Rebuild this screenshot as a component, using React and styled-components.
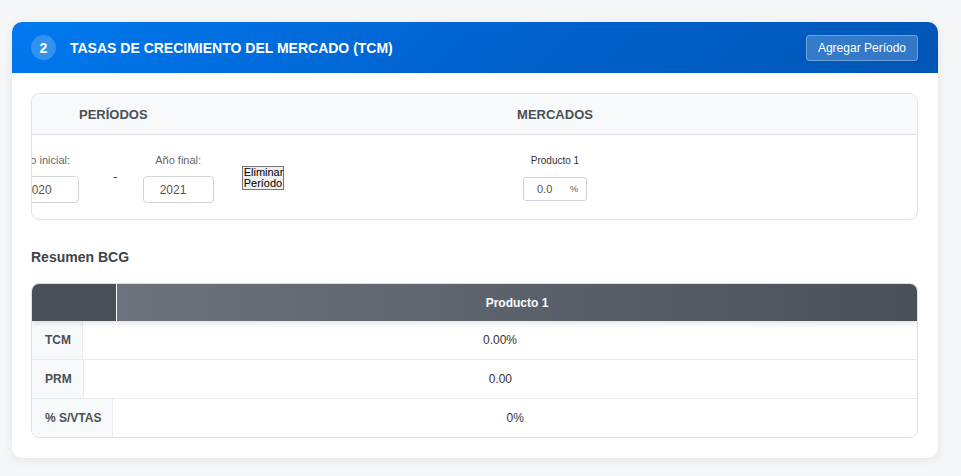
import { useEffect, useRef } from "react";
import styled, { createGlobalStyle } from "styled-components";

const GlobalStyle = createGlobalStyle`
    html, body {
        margin: 0;
        padding: 0;
        background: #f5f6f8;
        font-family: "Liberation Sans", Arial, sans-serif;
    }
`;

const Page = styled.div`
    padding: 22px 23px 19px 12px;
`;

const Card = styled.section`
    background: #fff;
    border-radius: 10px;
    box-shadow: 0 2px 10px rgba(0, 0, 0, 0.08);
    overflow: hidden;
`;

const Header = styled.header`
    display: flex;
    align-items: center;
    height: 51px;
    padding: 0 20px 0 19px;
    background: linear-gradient(135deg, #0079f0 0%, #0063cf 50%, #0056b6 100%);
    color: #fff;
`;

const StepBadge = styled.span`
    display: flex;
    align-items: center;
    justify-content: center;
    width: 25px;
    height: 25px;
    border-radius: 50%;
    background: rgba(255, 255, 255, 0.2);
    font-size: 14px;
    font-weight: 700;
    margin-right: 14px;
`;

const HeaderTitle = styled.h2`
    flex: 1;
    margin: 0;
    font-size: 14px;
    font-weight: 700;
`;

const AddButton = styled.button`
    height: 26px;
    padding: 0 11px;
    border: 1px solid rgba(255, 255, 255, 0.3);
    border-radius: 4px;
    background: rgba(255, 255, 255, 0.2);
    color: #fff;
    font-family: inherit;
    font-size: 12px;
`;

const Body = styled.div`
    padding: 20px 20px 20px 19px;
`;

const PeriodTable = styled.div`
    border: 1px solid #dfe3e8;
    border-radius: 8px;
    overflow-x: auto;
    scrollbar-width: none;
    &::-webkit-scrollbar {
        display: none;
    }
`;

const PeriodGrid = styled.div`
    display: grid;
    grid-template-columns: 320px 1fr;
    min-width: 922px;
`;

const HeadCell = styled.div`
    display: flex;
    align-items: center;
    height: 40px;
    background: #f8f9fa;
    border-bottom: 1px solid #dfe3e8;
    font-size: 13px;
    font-weight: 700;
    color: #495057;
    padding: ${(p) => (p.$center ? "0 124px 0 0" : "0 0 0 83px")};
    justify-content: ${(p) => (p.$center ? "center" : "flex-start")};
`;

const BodyCell = styled.div`
    box-sizing: border-box;
    display: flex;
    align-items: flex-start;
    height: 84px;
    padding: ${(p) => (p.$center ? "20px 124px 0 0" : "19px 0 0 12px")};
    justify-content: ${(p) => (p.$center ? "center" : "flex-start")};
`;

const Field = styled.div`
    display: flex;
    flex-direction: column;
    align-items: center;
`;

const FieldLabel = styled.label`
    font-size: ${(p) => (p.$small ? "10px" : "11px")};
    line-height: ${(p) => (p.$small ? "12px" : "13px")};
    color: ${(p) => (p.$small ? "#333" : "#666")};
    margin-bottom: ${(p) => (p.$small ? "10px" : "9px")};
`;

const YearInput = styled.input`
    box-sizing: border-box;
    width: 71px;
    height: 27px;
    padding: 0 16px;
    border: 1px solid #ced4da;
    border-radius: 4px;
    font-family: inherit;
    font-size: 12px;
    color: #555;
    background: #fff;
`;

const Dash = styled.span`
    margin: 15px 25px 0 34px;
    font-size: 14px;
    line-height: 16px;
    color: #555;
`;

const RemoveButton = styled.button`
    width: 42px;
    margin: 12px 0 0 28px;
    padding: 0 1px;
    border: 1px solid #767676;
    border-radius: 0;
    background: #efefef;
    color: #000;
    font-family: inherit;
    font-size: 11px;
    line-height: 11px;
    text-align: left;
`;

const RateBox = styled.div`
    display: flex;
    align-items: center;
    box-sizing: border-box;
    width: 64px;
    height: 24px;
    padding: 0 8px 0 13px;
    border: 1px solid #ced4da;
    border-radius: 3px;
    font-size: 11px;
    color: #555;
`;

const RateValue = styled.span`
    flex: 1;
`;

const Percent = styled.span`
    font-size: 9px;
`;

const SectionTitle = styled.h3`
    margin: 29px 0 17px;
    font-size: 14px;
    line-height: 17px;
    font-weight: 700;
    color: #3d4449;
`;

const Summary = styled.div`
    border: 1px solid #dee2e6;
    border-radius: 8px;
    overflow: hidden;
`;

const SummaryHead = styled.div`
    display: flex;
    height: 37px;
    box-shadow: 0 2px 6px rgba(0, 0, 0, 0.12);
    position: relative;
`;

const CornerCell = styled.div`
    width: 84px;
    background: #495057;
    border-right: 1px solid #fff;
`;

const ProductHead = styled.div`
    flex: 1;
    display: flex;
    align-items: center;
    justify-content: center;
    background: linear-gradient(90deg, #6c737c 0%, #4a5058 100%);
    color: #fff;
    font-size: 12px;
    font-weight: 700;
`;

const Row = styled.div`
    display: flex;
    height: 38px;
    border-top: ${(p) => (p.$first ? "none" : "1px solid #e9ecef")};
`;

const RowLabel = styled.div`
    display: flex;
    align-items: center;
    padding: 0 11px 0 13px;
    background: #f8f9fa;
    border-right: 1px solid #e9ecef;
    font-size: 12px;
    font-weight: 700;
    color: #495057;
`;

const RowValue = styled.div`
    flex: 1;
    display: flex;
    align-items: center;
    justify-content: center;
    font-size: 12px;
    color: #333;
`;

const summaryRows = [
    { label: "TCM", value: "0.00%" },
    { label: "PRM", value: "0.00" },
    { label: "% S/VTAS", value: "0%" },
];

export default function App() {
    const scrollRef = useRef(null);

    useEffect(() => {
        if (scrollRef.current) scrollRef.current.scrollLeft = 36;
    }, []);

    return (
        <Page>
            <GlobalStyle />
            <Card>
                <Header>
                    <StepBadge>2</StepBadge>
                    <HeaderTitle>TASAS DE CRECIMIENTO DEL MERCADO (TCM)</HeaderTitle>
                    <AddButton>Agregar Período</AddButton>
                </Header>
                <Body>
                    <PeriodTable ref={scrollRef}>
                        <PeriodGrid>
                            <HeadCell>PERÍODOS</HeadCell>
                            <HeadCell $center>MERCADOS</HeadCell>
                            <BodyCell>
                                <Field>
                                    <FieldLabel>Año inicial:</FieldLabel>
                                    <YearInput defaultValue="2020" />
                                </Field>
                                <Dash>-</Dash>
                                <Field>
                                    <FieldLabel>Año final:</FieldLabel>
                                    <YearInput defaultValue="2021" />
                                </Field>
                                <RemoveButton>Eliminar Período</RemoveButton>
                            </BodyCell>
                            <BodyCell $center>
                                <Field>
                                    <FieldLabel $small>Producto 1</FieldLabel>
                                    <RateBox>
                                        <RateValue>0.0</RateValue>
                                        <Percent>%</Percent>
                                    </RateBox>
                                </Field>
                            </BodyCell>
                        </PeriodGrid>
                    </PeriodTable>

                    <SectionTitle>Resumen BCG</SectionTitle>
                    <Summary>
                        <SummaryHead>
                            <CornerCell />
                            <ProductHead>Producto 1</ProductHead>
                        </SummaryHead>
                        {summaryRows.map((r, i) => (
                            <Row key={r.label} $first={i === 0}>
                                <RowLabel>{r.label}</RowLabel>
                                <RowValue>{r.value}</RowValue>
                            </Row>
                        ))}
                    </Summary>
                </Body>
            </Card>
        </Page>
    );
}
